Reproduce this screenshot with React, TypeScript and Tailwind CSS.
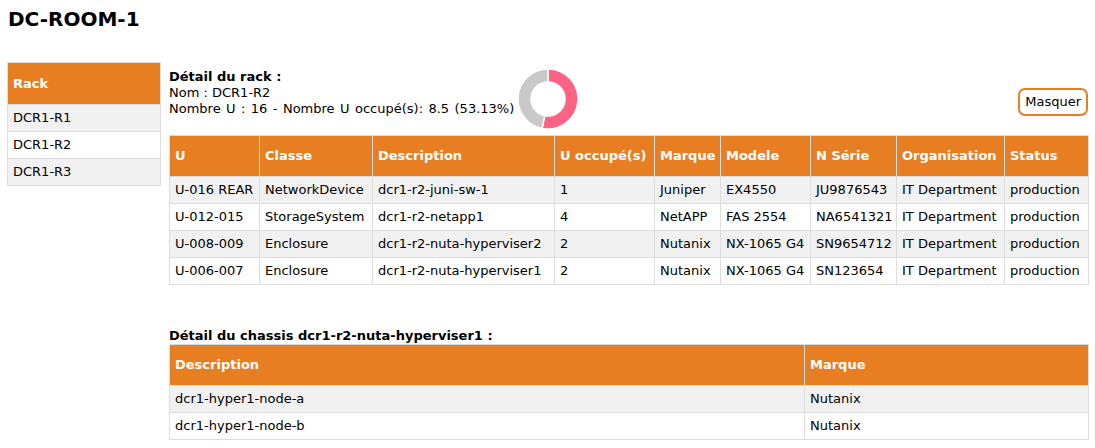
import React from "react";

const rows = [
  ["U-016 REAR", "NetworkDevice", "dcr1-r2-juni-sw-1", "1", "Juniper", "EX4550", "JU9876543", "IT Department", "production"],
  ["U-012-015", "StorageSystem", "dcr1-r2-netapp1", "4", "NetAPP", "FAS 2554", "NA6541321", "IT Department", "production"],
  ["U-008-009", "Enclosure", "dcr1-r2-nuta-hyperviser2", "2", "Nutanix", "NX-1065 G4", "SN9654712", "IT Department", "production"],
  ["U-006-007", "Enclosure", "dcr1-r2-nuta-hyperviser1", "2", "Nutanix", "NX-1065 G4", "SN123654", "IT Department", "production"],
];

const headers = ["U", "Classe", "Description", "U occupé(s)", "Marque", "Modele", "N Série", "Organisation", "Status"];
const colWidths = ["w-[90px]", "w-[113px]", "w-[182px]", "w-[100px]", "w-[66px]", "w-[90px]", "w-[86px]", "w-[108px]", "w-[84px]"];

const nodes = [
  ["dcr1-hyper1-node-a", "Nutanix"],
  ["dcr1-hyper1-node-b", "Nutanix"],
];

const th = "border border-[#dddddd] bg-[#e87e22] text-white font-bold text-left px-[5px] py-3 leading-4 whitespace-nowrap";
const td = "border border-[#dddddd] px-[5px] py-[5px] leading-4 whitespace-nowrap";

function Donut() {
  return (
    <svg width="64" height="64" viewBox="0 0 64 64" className="shrink-0">
      <path
        d="M32 2 A30 30 0 1 1 26.14 61.42 L28.68 48.67 A17 17 0 1 0 32 15 Z"
        fill="#ff6384"
        stroke="#ffffff"
        strokeWidth="1.5"
      />
      <path
        d="M26.14 61.42 A30 30 0 0 1 32 2 L32 15 A17 17 0 0 0 28.68 48.67 Z"
        fill="#c9c9c9"
        stroke="#ffffff"
        strokeWidth="1.5"
      />
    </svg>
  );
}

export default function App() {
  return (
    <div className="w-[1095px] h-[448px] overflow-hidden bg-white text-black text-[13px] font-['DejaVu_Sans',sans-serif]">
      <h1 className="text-[20px] font-bold leading-6 px-2 pt-[7px]">DC-ROOM-1</h1>

      <div className="flex items-start gap-[8px] pl-[7px] mt-[31px]">
        {/* rack list */}
        <table className="border-collapse table-fixed w-[154px]">
          <thead>
            <tr>
              <th className={`${th} h-[42px]`}>Rack</th>
            </tr>
          </thead>
          <tbody>
            {["DCR1-R1", "DCR1-R2", "DCR1-R3"].map((r, i) => (
              <tr key={r} className={i % 2 === 0 ? "bg-[#f1f1f1]" : "bg-white"}>
                <td className={td}>{r}</td>
              </tr>
            ))}
          </tbody>
        </table>

        <div className="w-[919px]">
          <div className="flex items-start h-[73px]">
            <div className="pt-[7px] leading-4">
              <div className="font-bold">Détail du rack :</div>
              <div>Nom : DCR1-R2</div>
              <div className="[word-spacing:1.3px]">Nombre U : 16 - Nombre U occupé(s): 8.5 (53.13%)</div>
            </div>
            <div className="mt-[5px] ml-[2px]">
              <Donut />
            </div>
            <button className="ml-auto mt-[26px] h-[28px] px-[5px] rounded-[7px] border-2 border-[#e87e22] bg-white text-[13px] leading-4">
              Masquer
            </button>
          </div>

          <table className="border-collapse table-fixed w-[919px]">
            <colgroup>
              {colWidths.map((w, i) => (
                <col key={i} className={w} />
              ))}
            </colgroup>
            <thead>
              <tr>
                {headers.map((h) => (
                  <th key={h} className={th}>
                    {h}
                  </th>
                ))}
              </tr>
            </thead>
            <tbody>
              {rows.map((r, i) => (
                <tr key={i} className={i % 2 === 0 ? "bg-[#f1f1f1]" : "bg-white"}>
                  {r.map((c, j) => (
                    <td key={j} className={td}>
                      {c}
                    </td>
                  ))}
                </tr>
              ))}
            </tbody>
          </table>

          <div className="font-bold leading-4 mt-[43px]">Détail du chassis dcr1-r2-nuta-hyperviser1 :</div>
          <table className="border-collapse table-fixed w-[919px]">
            <colgroup>
              <col className="w-[635px]" />
              <col className="w-[284px]" />
            </colgroup>
            <thead>
              <tr>
                <th className={th}>Description</th>
                <th className={th}>Marque</th>
              </tr>
            </thead>
            <tbody>
              {nodes.map((n, i) => (
                <tr key={i} className={i % 2 === 0 ? "bg-[#f1f1f1]" : "bg-white"}>
                  <td className={td}>{n[0]}</td>
                  <td className={td}>{n[1]}</td>
                </tr>
              ))}
            </tbody>
          </table>
        </div>
      </div>
    </div>
  );
}
